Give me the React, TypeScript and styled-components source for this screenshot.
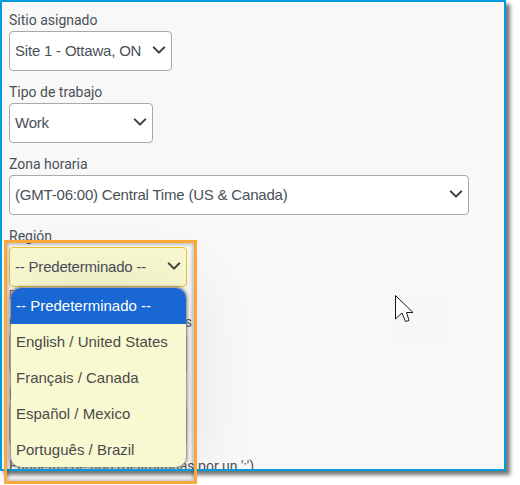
import React from "react";
import styled, { createGlobalStyle } from "styled-components";

const regions = [
	"-- Predeterminado --",
	"English / United States",
	"Français / Canada",
	"Español / Mexico",
	"Português / Brazil",
];

const Chevron = () => (
	<svg width="14" height="14" viewBox="0 0 16 16" fill="none">
		<path d="M2 5l6 6 6-6" stroke="#3f3f3f" strokeWidth="2.4" strokeLinecap="round" strokeLinejoin="round" />
	</svg>
);

const App = () => {
	return (
		<Stage>
			<GlobalStyle />
			<Frame>
				<Field>
					<Label>Sitio asignado</Label>
					<Select $width={163}>
						Site 1 - Ottawa, ON
						<Chevron />
					</Select>
				</Field>
				<Field>
					<Label>Tipo de trabajo</Label>
					<Select $width={144}>
						Work
						<Chevron />
					</Select>
				</Field>
				<Field>
					<Label>Zona horaria</Label>
					<Select $width={460}>
						(GMT-06:00) Central Time (US &amp; Canada)
						<Chevron />
					</Select>
				</Field>
				<Field>
					<Label>Región</Label>
					<Anchor>
						<Select $width={178} $active>
							-- Predeterminado --
							<Chevron />
						</Select>
						<Menu>
							{regions.map((region, i) => (
								<Option key={region} $selected={i === 0}>
									{region}
								</Option>
							))}
						</Menu>
					</Anchor>
					<ErrorText>Este campo es obligatorio</ErrorText>
				</Field>
				<Field>
					<Label>Grupos de turnos designados</Label>
					<Select $width={178}>
						Todos
						<Chevron />
					</Select>
				</Field>
				<Field>
					<Label>Idioma</Label>
					<Select $width={178}>
						Todos
						<Chevron />
					</Select>
				</Field>
				<Field>
					<Label>Etiquetas de tipo (delimitadas por un ':')</Label>
				</Field>
			</Frame>
			<Highlight />
			<Cursor width="48" height="48" viewBox="0 0 48 48">
				<rect width="48" height="48" fill="#f7f7f7" />
				<path
					d="M0.5 0.5V24L7 18L10.5 26.5L14 25.5L11.5 17.5L18 17.5Z"
					fill="#fff"
					stroke="#1a1a1a"
					strokeWidth="1"
				/>
			</Cursor>
		</Stage>
	);
};

export default App;

const GlobalStyle = createGlobalStyle`
	html, body {
		margin: 0;
		padding: 0;
		background-color: #fff;
	}
`;

const Stage = styled.div`
	position: relative;
	width: 520px;
	height: 485px;
	overflow: hidden;
	font-family: "Liberation Sans", Arial, sans-serif;
`;

const Frame = styled.div`
	box-sizing: border-box;
	width: 506px;
	height: 471px;
	border: 2px solid #029cdc;
	background-color: #f8f8f8;
	padding: 11px 7px 0;
	box-shadow: 4px 4px 4px rgba(0, 0, 0, 0.55);
	overflow: hidden;
	display: flex;
	flex-direction: column;
	gap: 14px;
`;

const Field = styled.div`
	display: flex;
	flex-direction: column;
	flex-shrink: 0;
`;

const Label = styled.div`
	font-family: Roboto, sans-serif;
	font-size: 14px;
	line-height: 14px;
	height: 18px;
	color: #4a5056;
`;

const Anchor = styled.div`
	position: relative;
`;

const Select = styled.div<{ $width: number; $active?: boolean }>`
	box-sizing: border-box;
	width: ${(p) => p.$width}px;
	height: 40px;
	padding: 0 5px 2px 5px;
	display: flex;
	align-items: center;
	justify-content: space-between;
	font-size: 15px;
	letter-spacing: -0.2px;
	color: #495057;
	white-space: nowrap;
	border-radius: 4px;
	border: 1px solid ${(p) => (p.$active ? "#ecc62c" : "#a9a9a9")};
	background-color: ${(p) => (p.$active ? "#fafad2" : "#fff")};
`;

const ErrorText = styled.div`
	font-size: 12px;
	line-height: 14px;
	color: #c0314f;
	padding-top: 1px;
	margin-bottom: -1px;
`;

const Menu = styled.div`
	position: absolute;
	top: 41px;
	left: 2px;
	width: 175px;
	height: 179px;
	border-radius: 10px;
	overflow: hidden;
	background-color: #f9f9d1;
	box-shadow: 0 0 3px 1px #777, 0 0 70px rgba(0, 0, 0, 0.12);
`;

const Option = styled.div<{ $selected?: boolean }>`
	box-sizing: border-box;
	height: 36px;
	padding: 0 0 2px 5px;
	display: flex;
	align-items: center;
	font-size: 15px;
	color: ${(p) => (p.$selected ? "#fff" : "#4a4a4a")};
	background-color: ${(p) => (p.$selected ? "#1967d2" : "transparent")};
`;

const Highlight = styled.div`
	position: absolute;
	left: 4px;
	top: 240px;
	width: 193px;
	height: 244px;
	box-sizing: border-box;
	border: 3px solid #f9a93a;
	box-shadow: inset 0 0 3px 2px rgba(0, 0, 0, 0.2);
	pointer-events: none;
`;

const Cursor = styled.svg`
	position: absolute;
	left: 395px;
	top: 295px;
`;
